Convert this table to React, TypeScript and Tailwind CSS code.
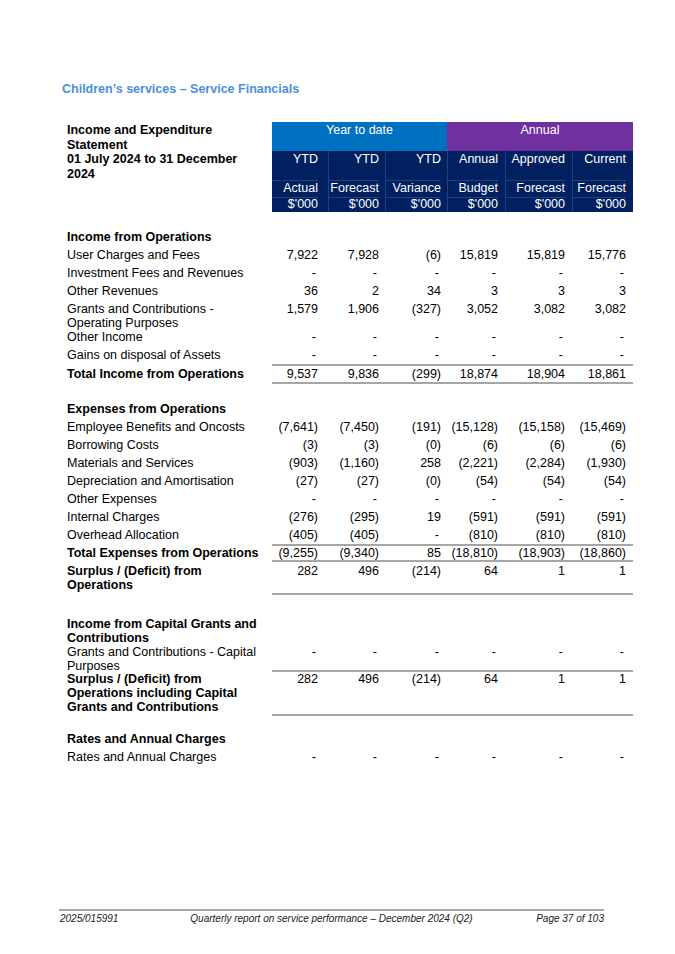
import clsx from "clsx";

const COLS = [
  "w-[56px] pr-[10px]",
  "w-[57px] pr-[6px]",
  "w-[62px] pr-[6px]",
  "w-[58px] pr-[7px]",
  "w-[67px] pr-[7px]",
  "w-[61px] pr-[7px]",
];

const DASH = ["-", "-", "-", "-", "-", "-"];

type Line = "total" | "bottom" | "top" | "both" | undefined;

type RowData = {
  label: string[];
  vals?: string[];
  bold?: boolean;
  pad?: string;
  line?: Line;
  h?: string;
  gap?: string;
};

const ROWS: RowData[] = [
  { label: ["Income from Operations"], bold: true },
  { label: ["User Charges and Fees"], vals: ["7,922", "7,928", "(6)", "15,819", "15,819", "15,776"] },
  { label: ["Investment Fees and Revenues"], vals: DASH },
  { label: ["Other Revenues"], vals: ["36", "2", "34", "3", "3", "3"] },
  {
    label: ["Grants and Contributions -", "Operating Purposes"],
    vals: ["1,579", "1,906", "(327)", "3,052", "3,082", "3,082"],
    pad: "pt-[2px] pb-0",
  },
  { label: ["Other Income"], vals: DASH, pad: "pt-0 pb-[2px]" },
  { label: ["Gains on disposal of Assets"], vals: DASH },
  {
    label: ["Total Income from Operations"],
    vals: ["9,537", "9,836", "(299)", "18,874", "18,904", "18,861"],
    bold: true,
    line: "total",
    pad: "pt-[1px] pb-[1px]",
  },
  { label: [], gap: "h-[16px]" },
  { label: ["Expenses from Operations"], bold: true },
  { label: ["Employee Benefits and Oncosts"], vals: ["(7,641)", "(7,450)", "(191)", "(15,128)", "(15,158)", "(15,469)"] },
  { label: ["Borrowing Costs"], vals: ["(3)", "(3)", "(0)", "(6)", "(6)", "(6)"] },
  { label: ["Materials and Services"], vals: ["(903)", "(1,160)", "258", "(2,221)", "(2,284)", "(1,930)"] },
  { label: ["Depreciation and Amortisation"], vals: ["(27)", "(27)", "(0)", "(54)", "(54)", "(54)"] },
  { label: ["Other Expenses"], vals: DASH },
  { label: ["Internal Charges"], vals: ["(276)", "(295)", "19", "(591)", "(591)", "(591)"] },
  { label: ["Overhead Allocation"], vals: ["(405)", "(405)", "-", "(810)", "(810)", "(810)"] },
  {
    label: ["Total Expenses from Operations"],
    vals: ["(9,255)", "(9,340)", "85", "(18,810)", "(18,903)", "(18,860)"],
    bold: true,
    line: "total",
    pad: "pt-0 pb-0",
  },
  {
    label: ["Surplus / (Deficit) from", "Operations"],
    vals: ["282", "496", "(214)", "64", "1", "1"],
    bold: true,
    line: "bottom",
    pad: "pt-[2px] pb-[1px]",
  },
  { label: [], gap: "h-[20px]" },
  { label: ["Income from Capital Grants and", "Contributions"], bold: true, pad: "pt-[2px] pb-0" },
  {
    label: ["Grants and Contributions - Capital", "Purposes"],
    vals: DASH,
    pad: "pt-0 pb-0",
    h: "h-[25px]",
  },
  {
    label: ["Surplus / (Deficit) from", "Operations including Capital", "Grants and Contributions"],
    vals: ["282", "496", "(214)", "64", "1", "1"],
    bold: true,
    line: "both",
    pad: "pt-0 pb-0",
  },
  { label: [], gap: "h-[14px]" },
  { label: ["Rates and Annual Charges"], bold: true },
  { label: ["Rates and Annual Charges"], vals: DASH },
];

function Row({ label, vals, bold, pad = "pt-[2px] pb-[2px]", line, h }: RowData) {
  const numBorder = {
    total: "border-y-2 border-[#a6a6a6]",
    both: "border-y-2 border-[#a6a6a6]",
    bottom: "border-b-2 border-[#a6a6a6]",
    top: "border-t-2 border-[#a6a6a6]",
  };
  const lblBorder = {
    total: "border-y-2 border-transparent",
    both: "border-y-2 border-transparent",
    bottom: "border-b-2 border-transparent",
    top: "border-t-2 border-transparent",
  };
  return (
    <div className={clsx("flex leading-[14px]", h)}>
      <div className={clsx("w-[205px] shrink-0 whitespace-nowrap", bold && "font-bold", line && lblBorder[line], pad)}>
        {label.map((l, i) => (
          <div key={i}>{l}</div>
        ))}
      </div>
      <div className={clsx("flex w-[361px]", line && numBorder[line], pad)}>
        {vals?.map((v, i) => (
          <div key={i} className={clsx(COLS[i], "text-right")}>
            {v === "-" ? <span className="mr-[2px]">-</span> : v}
          </div>
        ))}
      </div>
    </div>
  );
}

const SUB = [
  ["YTD", "Actual", "$'000"],
  ["YTD", "Forecast", "$'000"],
  ["YTD", "Variance", "$'000"],
  ["Annual", "Budget", "$'000"],
  ["Approved", "Forecast", "$'000"],
  ["Current", "Forecast", "$'000"],
];

function Header() {
  return (
    <div className="flex">
      <div className="w-[205px] shrink-0 whitespace-nowrap pt-[1px] font-bold leading-[14.5px]">
        <div>Income and Expenditure</div>
        <div>Statement</div>
        <div>01 July 2024 to 31 December</div>
        <div>2024</div>
      </div>
      <div className="w-[361px] text-white">
        <div className="flex h-[29px] leading-[14px]">
          <div className="w-[175px] bg-[#0070c0] pt-[1px] text-center">Year to date</div>
          <div className="w-[186px] bg-[#7030a0] pt-[1px] text-center">Annual</div>
        </div>
        <div className="flex bg-[#002060]">
          {SUB.map((c, i) => (
            <div key={i} className={clsx(COLS[i], "text-right", i > 0 && "border-l border-[#23407e]")}>
              <div className="h-[29px] pt-[1px] leading-[14px]">{c[0]}</div>
              <div className="h-[17px] border-t border-[#23407e] leading-[14px]">{c[1]}</div>
              <div className="h-[15px] border-t border-[#23407e] leading-[12px]">{c[2]}</div>
            </div>
          ))}
        </div>
      </div>
    </div>
  );
}

export default function App() {
  return (
    <div className="min-h-[954px] w-[675px] bg-white pt-[82px] font-['Liberation_Sans',Arial,sans-serif] text-[12.5px] text-black">
      <h1 className="ml-[62px] text-[12.5px] font-bold leading-[14px] text-[#4a8fdb]">
        Children&rsquo;s services &ndash; Service Financials
      </h1>

      <div className="ml-[67px] mt-[26px]">
        <Header />
        <div className="h-[16px]" />
        {ROWS.map((r, i) => (r.gap ? <div key={i} className={r.gap} /> : <Row key={i} {...r} />))}
      </div>

      <footer className="ml-[59px] mt-[143px] grid w-[545px] grid-cols-[1fr_auto_1fr] border-t-2 border-[#a6a6a6] pt-[2px] text-[10px] italic leading-[12px] text-[#1a1a1a]">
        <span className="pl-[1px]">2025/015991</span>
        <span>Quarterly report on service performance &ndash; December 2024 (Q2)</span>
        <span className="text-right">Page 37 of 103</span>
      </footer>
    </div>
  );
}
